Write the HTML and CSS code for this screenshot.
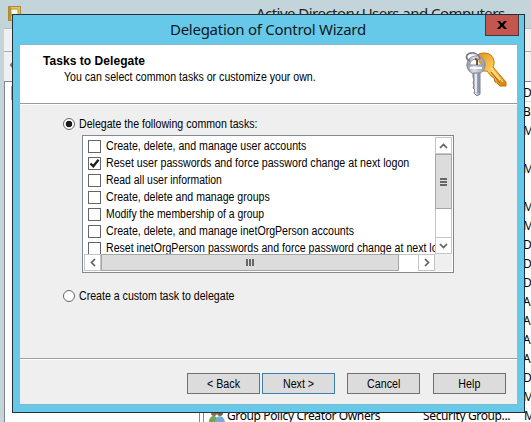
FILE: index.html
```html
<!DOCTYPE html>
<html lang="en">
<head>
<meta charset="utf-8">
<title>Delegation of Control Wizard</title>
<link rel="stylesheet" href="styles.css">
</head>
<body>
<div class="desktop">
  <div class="parent">
    <div class="parent-title"><svg class="app-icon" width="13" height="16" viewBox="0 0 13 16"><path d="M0 0h13v15H0z" fill="#ad8b35"/><path d="M1 1h11v13H1z" fill="#e0c568"/><path d="M1 1h2v13H1z" fill="#b4943b"/><path d="M3 3h7v6H3z" fill="#fffbe0" stroke="#b39339"/><path d="M4 4h5v2H4z" fill="#fff"/></svg><span>Active Directory Users and Computers</span></div>
    <div class="parent-frame">
      <div class="menubar"></div>
      <div class="toolbar"><svg width="8" height="10" viewBox="0 0 8 10"><path d="M5 1 1.500 5 5 9M8 4H3v2h5" fill="none" stroke="#777" stroke-width="1.400"/></svg></div>
      <div class="panes">
        <div class="tree"><svg width="6" height="16" viewBox="0 0 6 16"><path d="M0 1h6v14H0z" fill="#c2aa65"/></svg></div>
        <div class="details">
          <div class="types"><span>D</span><span>B</span><span>M</span><span></span><span>M</span><span></span><span>M</span><span>M</span><span>D</span><span>D</span><span>D</span><span>A</span><span>A</span><span>A</span><span>A</span><span>D</span><span>M</span></div>
          <div class="record"><svg width="17" height="16" viewBox="0 0 17 16"><circle cx="5" cy="5" r="3" fill="#8b6a4c"/><path d="M0 14c0-8 9-8 9 0z" fill="#75a35a"/><circle cx="11" cy="5" r="3" fill="#79604f"/><path d="M6 15c0-9 10-9 10 0z" fill="#77acd3"/></svg><span class="group">Group Policy Creator Owners</span><span class="kind">Security Group...</span><span class="desc">M</span></div>
        </div>
      </div>
    </div>
  </div>

  <div class="dialog">
    <div class="titlebar"><span class="title">Delegation of Control Wizard</span>
      <div class="close"><svg width="10" height="8" viewBox="0 0 10 8"><path d="M0 0h3l2 2.500L7 0h3L6.600 4 10 8H7L5 5.500 3 8H0l3.400-4z" fill="#000"/></svg></div>
    </div>
    <div class="client">
      <div class="header">
        <div class="heading"><div class="h1">Tasks to Delegate</div><div class="sub"><span class="t">You can select common tasks or customize your own.</span></div></div>
        <svg class="keys" width="42" height="46" viewBox="0 0 42 46">
          <defs><linearGradient id="gold" x1="0" x2="1" y2="1"><stop stop-color="#d98c16"/><stop offset=".5" stop-color="#ffca58"/><stop offset="1" stop-color="#d67c09"/></linearGradient><linearGradient id="steel"><stop stop-color="#8d93a2"/><stop offset=".4" stop-color="#dde0ea"/><stop offset="1" stop-color="#9197ab"/></linearGradient></defs>
          <path d="M13 2C18 0 25 1 27 6c2 4 1 7 0 9l13 15 0 4-6 0-3-3-2-1-1-4-3-2-4-5c-6 1-12-3-12-9 0-3 1-6 4-8z" fill="url(#gold)" stroke="#bd7811"/>
          <path d="M25 16 37 30M26 19l8 9" stroke="#fff0a0" fill="none"/>
          <path d="M25 20l9 11" stroke="#a75d09" fill="none"/>
          <circle cx="10" cy="13" r="9.200" fill="url(#steel)" stroke="#878da0"/>
          <path d="M7 21h7v21l-3 2-3-3 1-3-2-2 1-3-1-2 1-3-1-3z" fill="url(#steel)" stroke="#777e93"/>
          <path d="M10 22v18" stroke="#fff"/><path d="M12 22v19" stroke="#777e94"/>
          <path d="M4 13c0-8 12-8 12 0z" fill="#fff" stroke="#858a99"/>
          <path d="M9 7c3 0 2 3 2 6" stroke="#6e5424" stroke-width="2" fill="none"/><path d="M13 8l2 4" stroke="#df9a31" stroke-width="2"/>
          <path d="M4 9C-1 7 0 3 3 1.500c5-2 10 1 11 6" stroke="#737986" stroke-width="1.700" fill="none"/><path d="M4 3c4-2 8 0 8 3" stroke="#d5d8df" stroke-width=".8" fill="none"/>
          <path d="M4 16h12" stroke="#f7f8fb" stroke-width="2"/>
        </svg>
      </div>
      <div class="body">
        <div class="radio-row"><i class="radio on"></i><span class="t">Delegate the following common tasks:</span></div>
        <div class="listbox">
          <div class="items">
            <div class="item"><i class="box"></i><span class="t">Create, delete, and manage user accounts</span></div>
            <div class="item"><i class="box"><svg width="11" height="11" viewBox="0 0 11 11"><path d="M1.500 5.500 4.300 8.300 9.500 1.800" fill="none" stroke="#1c1c1c" stroke-width="2.300"/></svg></i><span class="t wide">Reset user passwords and force password change at next logon</span></div>
            <div class="item"><i class="box"></i><span class="t narrow">Read all user information</span></div>
            <div class="item"><i class="box"></i><span class="t">Create, delete and manage groups</span></div>
            <div class="item"><i class="box"></i><span class="t narrow">Modify the membership of a group</span></div>
            <div class="item"><i class="box"></i><span class="t">Create, delete, and manage inetOrgPerson accounts</span></div>
            <div class="item"><i class="box"></i><span class="t">Reset inetOrgPerson passwords and force password change at next logon</span></div>
          </div>
          <div class="vbar"><div class="arrow"><svg width="9" height="6" viewBox="0 0 9 6"><path d="M1 5l3.500-3.500L8 5" /></svg></div><div class="vthumb"><i></i><i></i><i></i></div><div class="track"></div><div class="arrow"><svg width="9" height="6" viewBox="0 0 9 6"><path d="M1 1l3.500 3.500L8 1"/></svg></div></div>
          <div class="hbar"><div class="arrow"><svg width="6" height="9" viewBox="0 0 6 9"><path d="M5 1 1.500 4.500 5 8"/></svg></div><div class="hthumb"><i></i><i></i><i></i></div><div class="track"></div><div class="arrow"><svg width="6" height="9" viewBox="0 0 6 9"><path d="M1 1l3.500 3.500L1 8"/></svg></div></div>
        </div>
        <div class="radio-row custom"><i class="radio"></i><span class="t">Create a custom task to delegate</span></div>
      </div>
      <div class="footer"><div class="btn"><span>&lt; Back</span></div><div class="btn next"><span>Next &gt;</span></div><div class="btn cancel"><span>Cancel</span></div><div class="btn help"><span>Help</span></div></div>
    </div>
  </div>
</div>
</body>
</html>
```
FILE: styles.css
```css
* { box-sizing: border-box; }
body { margin: 0; background: #c3d5da; overflow: hidden; }
svg { display: block; flex: none; }
.desktop { position: relative; width: 531px; height: 422px; overflow: hidden; font: 12px/17px "Liberation Sans", Arial, sans-serif; color: #000; white-space: nowrap; }
.t { display: inline-block; transform: scaleX(.883); transform-origin: 0 50%; }
.wide { transform: scaleX(.888); }
.narrow { transform: scaleX(.868); }
.parent { width: 531px; height: 422px; display: flex; flex-direction: column; font-family: "Noto Sans", sans-serif; overflow: hidden; }
.parent-title { height: 28px; flex: none; display: flex; font-size: 15px; line-height: 22px; padding: 3px 0 0 8px; }
.app-icon { margin-top: 3px; }
.parent-title span { margin-left: 235px; margin-top: -1px; width: 250px; letter-spacing: -.53px; color: #222; }
.parent-frame { flex: 1; margin-left: 4px; display: flex; flex-direction: column; border-top: 1px solid #b3bec2; }
.menubar { height: 23px; flex: none; background: #f0f0f0; border-bottom: 1px solid #aaaeb5; }
.toolbar { height: 30px; flex: none; background: #f0f0f0; border-bottom: 1px solid #85888c; padding: 8px 0 0 5px; }
.panes { flex: 1; display: flex; background: #fff; border-left: 1px solid #81858a; }
.tree { width: 195px; flex: none; border-right: 1px solid #85888c; padding: 3px 0 0 6px; }
.details { flex: 1; margin-left: 3px; border-left: 1px solid #85888c; display: flex; flex-direction: column; font-size: 12px; }
.types { margin-left: 319px; display: flex; flex-direction: column; padding-top: 1px; }
.types span { height: 19px; line-height: 19px; }
.types span:first-child { border-bottom: 1px solid #ddd; }
.record { height: 19px; display: flex; align-items: center; padding-left: 5px; }
.group { margin-left: 1px; width: 196px; letter-spacing: -.38px; }
.kind { width: 101px; letter-spacing: -.36px; }
.dialog { position: absolute; left: 12px; top: 14px; width: 513px; height: 399px; background: #66c9e9; border: 1px solid #20323b; padding: 0 7px 7px; display: flex; flex-direction: column; }
.titlebar { height: 29px; flex: none; display: flex; padding-left: 150px; position: relative; font: 15px/29px "Noto Sans", sans-serif; color: #10181c; }
.title { letter-spacing: -.27px; }
.close { position: absolute; right: -2px; top: 0; width: 34px; height: 21px; background: #c3564f; border: 1px solid #4f3538; border-top: 0; display: flex; align-items: center; justify-content: center; }
.client { flex: 1; background: #efefef; border: 1px solid #85b9ca; border-width: 1px 0; display: flex; flex-direction: column; }
.header { height: 59px; flex: none; background: #fff; border-bottom: 1px solid #9b9b9b; box-shadow: 0 1px #fff; display: flex; justify-content: space-between; padding: 8px 9px 0 23px; }
.h1 { font-weight: 700; line-height: 17px; height: 16px; letter-spacing: .05px; }
.sub { margin-left: 21px; line-height: 16px; height: 16px; }
.keys { overflow: visible; margin-top: -1px; }
.body { height: 254px; flex: none; padding: 12px 0 0 43px; }
.radio-row { display: flex; align-items: center; height: 17px; }
.radio { width: 12px; height: 12px; border: 1px solid #666; border-radius: 50%; background: #fff; margin-right: 4px; flex: none; position: relative; top: -1px; }
.on { background: radial-gradient(circle, #1c1c1c 0 3px, #fff 3.600px); }
.listbox { margin: 2px 0 0 19px; width: 372px; height: 138px; border: 1px solid #828790; background: #fff; padding: 1px; display: grid; grid-template: 117px 17px / 351px 17px; }
.items { overflow: hidden; padding: 1px 0 0 4px; }
.item { height: 17px; display: flex; align-items: center; }
.box { width: 13px; height: 13px; border: 1px solid #666; background: #fff; margin-right: 5px; flex: none; }
.vbar { display: flex; flex-direction: column; background: #fff; border: 1px solid #c5c5c5; border-width: 0 1px; }
.hbar { display: flex; grid-column: 1 / 3; background: #fff; width: 351px; box-shadow: 17px 0 #efefef; border-top: 1px solid #c5c5c5; }
.arrow { flex: none; width: 17px; height: 17px; border: 1px solid #c5c5c5; background: #fff; display: flex; align-items: center; justify-content: center; }
.vbar .arrow { width: 15px; border-width: 1px 0; }
.hbar .arrow { height: 16px; border-width: 0 1px 1px; }
.arrow path { fill: none; stroke: #606060; stroke-width: 1.700; }
.track { flex: 1; }
.vthumb, .hthumb { background: #dcdcdc; border: 1px solid #a6a6a6; display: flex; align-items: center; justify-content: center; flex: none; gap: 1px; }
.vthumb { width: 17px; height: 55px; margin-left: -1px; flex-direction: column; }
.hthumb { width: 298px; height: 17px; margin-top: -1px; }
.vthumb i { width: 7px; height: 2px; background: #666; }
.hthumb i { width: 2px; height: 7px; background: #666; }
.custom { margin-top: 15px; }
.footer { flex: 1; border-top: 1px solid #a0a0a0; box-shadow: inset 0 1px #fff; display: flex; padding: 14px 0 0 167px; }
.btn { width: 73px; height: 21px; background: #dcdcdc; border: 1px solid #707070; text-align: center; line-height: 20px; }
.btn span { display: inline-block; transform: scaleX(.89); }
.next { margin-left: 2px; border-color: #3c7fb1; }
.cancel { margin-left: 12px; }
.help { margin-left: 13px; }
```
